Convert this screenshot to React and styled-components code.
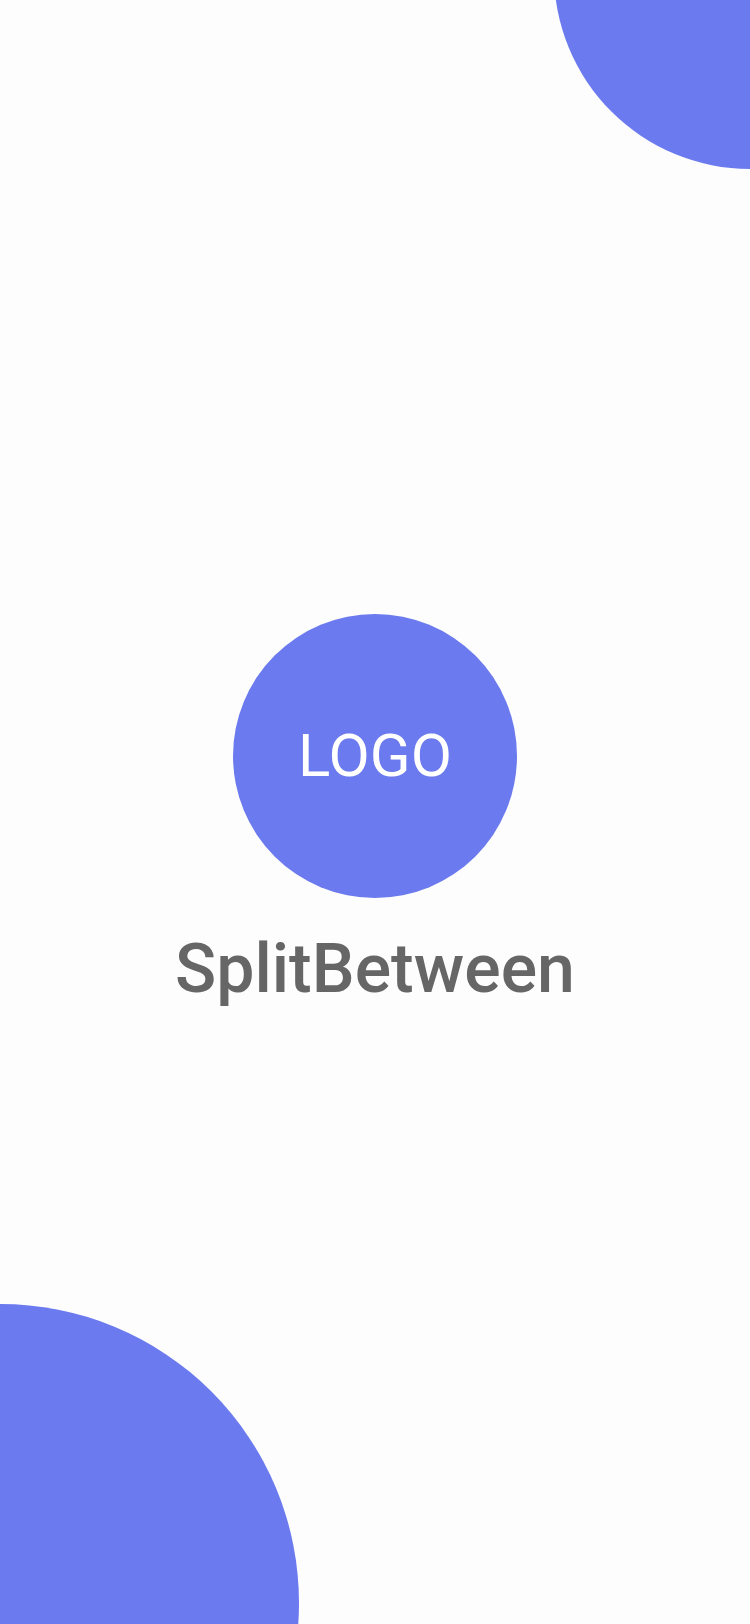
import styled, { createGlobalStyle } from "styled-components";

const GlobalStyle = createGlobalStyle`
  html, body {
    margin: 0;
    padding: 0;
    background: #fdfdfd;
  }
  body {
    font-family: Roboto, "Noto Sans", sans-serif;
  }
`;

const App = () => {
  return (
    <Screen>
      <GlobalStyle />
      <Blob $size={392} $top={-223} $left={554} />
      <Blob $size={598} $top={1304} $left={-299} />
      <Content>
        <LogoCircle>
          <LogoText>LOGO</LogoText>
        </LogoCircle>
        <AppName>SplitBetween</AppName>
      </Content>
    </Screen>
  );
};

export default App;

// Styled Components
const Screen = styled.div`
  position: relative;
  width: 750px;
  height: 1624px;
  overflow: hidden;
  background: #fdfdfd;
  display: flex;
  align-items: center;
  justify-content: center;
`;

const Blob = styled.div`
  position: absolute;
  top: ${(p) => p.$top}px;
  left: ${(p) => p.$left}px;
  width: ${(p) => p.$size}px;
  height: ${(p) => p.$size}px;
  border-radius: 50%;
  background: #6b7aee;
`;

const Content = styled.div`
  display: flex;
  flex-direction: column;
  align-items: center;
  gap: 32px;
`;

const LogoCircle = styled.div`
  width: 284px;
  height: 284px;
  border-radius: 50%;
  background: #6b7aee;
  display: flex;
  align-items: center;
  justify-content: center;
`;

const LogoText = styled.span`
  color: #ffffff;
  font-size: 60px;
  font-weight: 400;
  line-height: 1;
`;

const AppName = styled.h1`
  margin: 0;
  color: #666666;
  font-size: 68px;
  font-weight: 500;
  line-height: 1.17;
`;
